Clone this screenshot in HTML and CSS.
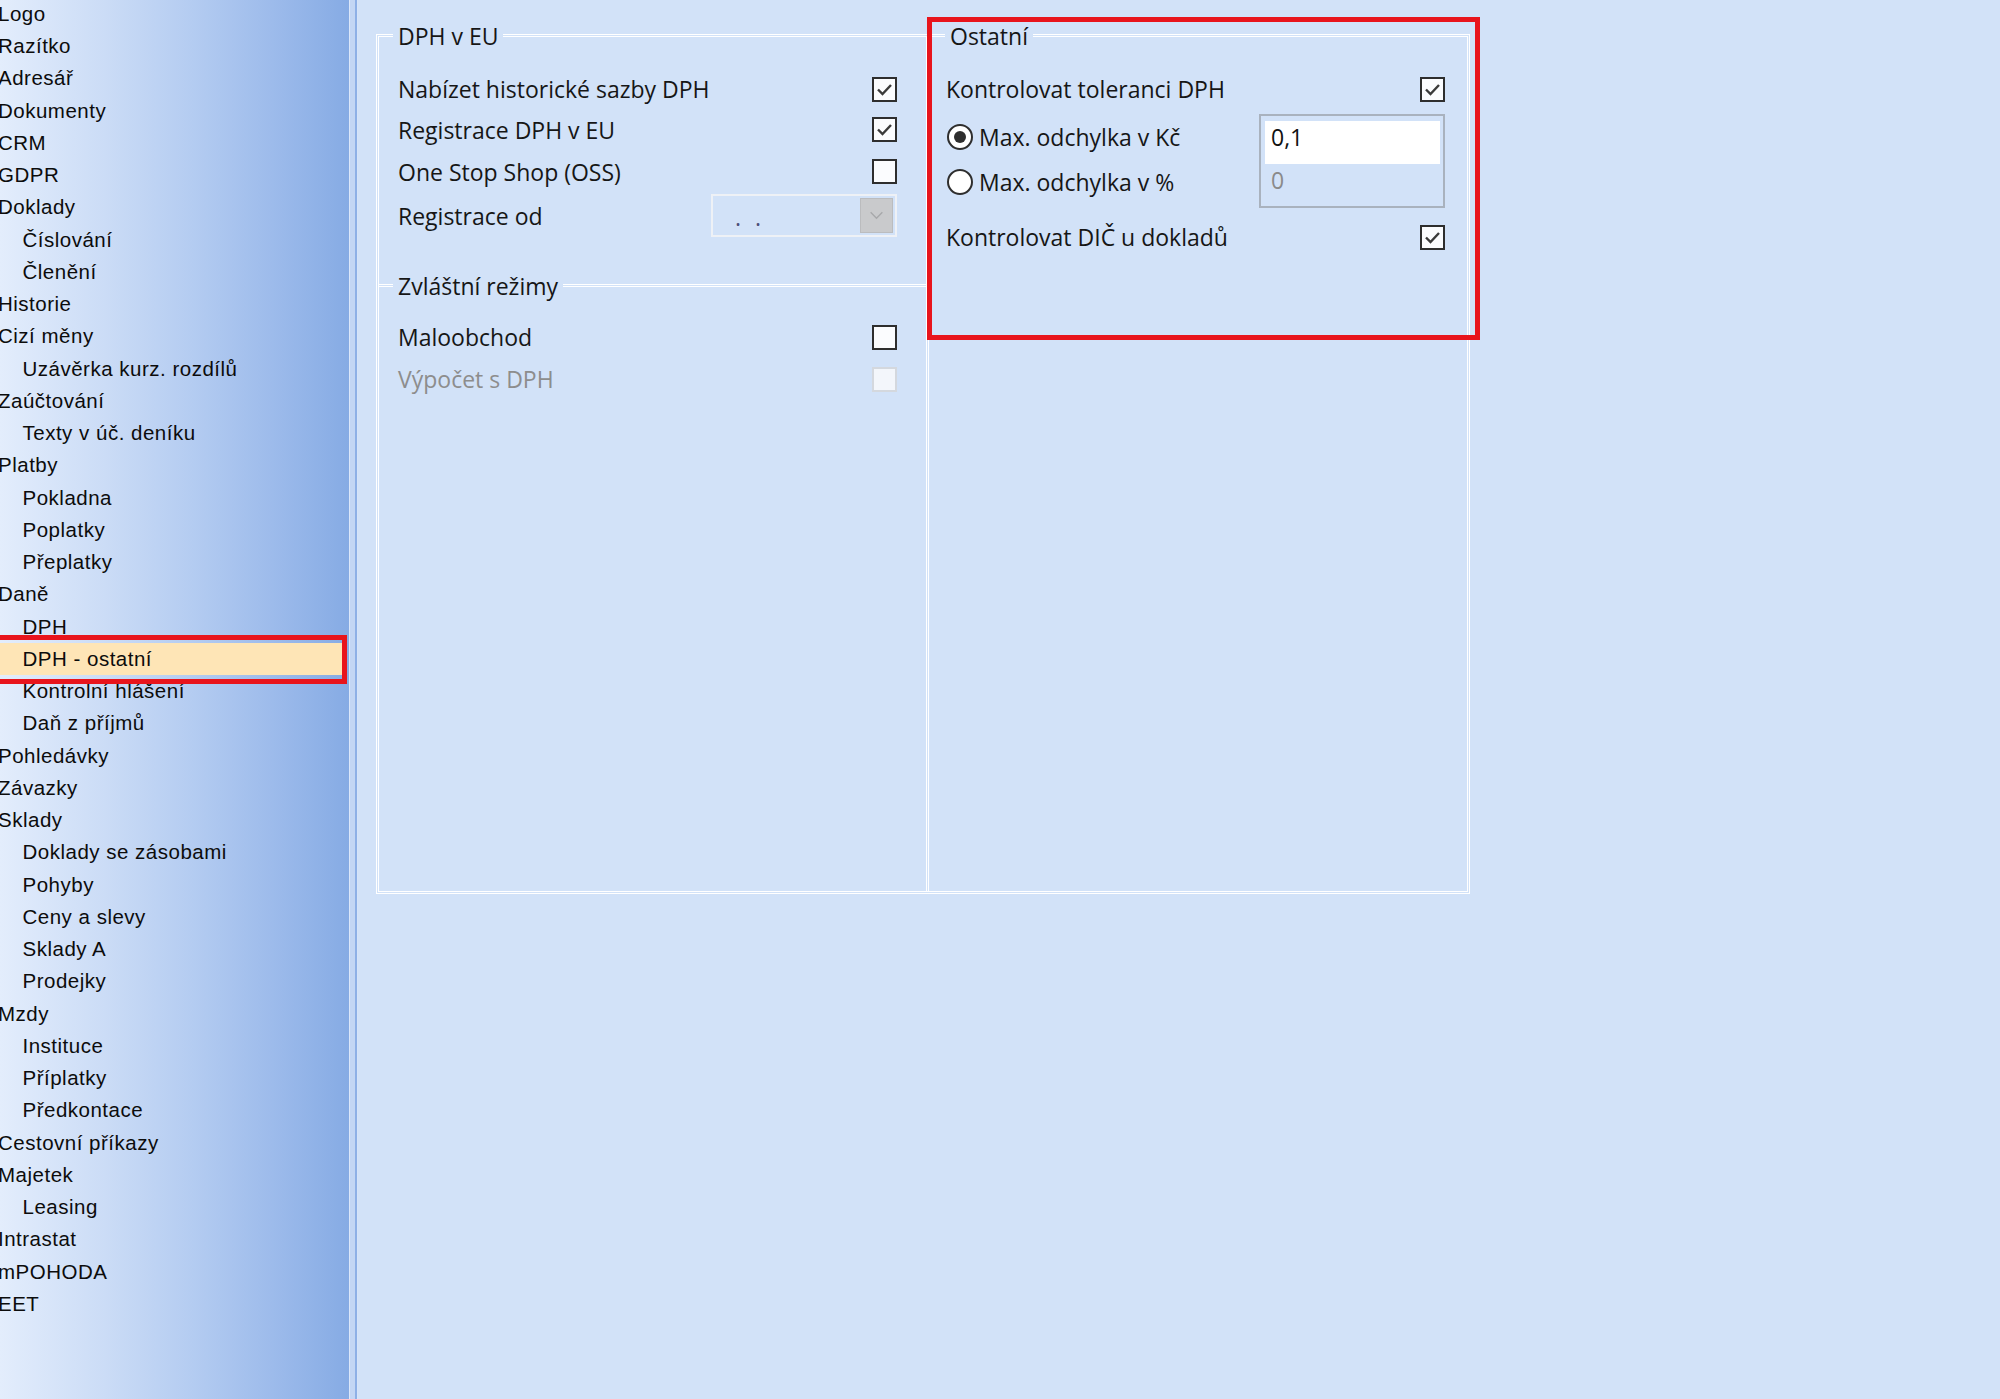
FILE: index.html
```html
<!DOCTYPE html>
<html lang="cs">
<head>
<meta charset="utf-8">
<title>Nastavení – DPH - ostatní</title>
<link rel="stylesheet" href="styles.css">
</head>
<body>
<div class="app">
  <nav class="tree">
    <ul class="tree-list">
      <li class="l0">Logo</li>
      <li class="l0">Razítko</li>
      <li class="l0">Adresář</li>
      <li class="l0">Dokumenty</li>
      <li class="l0">CRM</li>
      <li class="l0">GDPR</li>
      <li class="l0">Doklady</li>
      <li class="l1">Číslování</li>
      <li class="l1">Členění</li>
      <li class="l0">Historie</li>
      <li class="l0">Cizí měny</li>
      <li class="l1">Uzávěrka kurz. rozdílů</li>
      <li class="l0">Zaúčtování</li>
      <li class="l1">Texty v úč. deníku</li>
      <li class="l0">Platby</li>
      <li class="l1">Pokladna</li>
      <li class="l1">Poplatky</li>
      <li class="l1">Přeplatky</li>
      <li class="l0">Daně</li>
      <li class="l1">DPH</li>
      <li class="l1 sel">DPH - ostatní</li>
      <li class="l1">Kontrolní hlášení</li>
      <li class="l1">Daň z příjmů</li>
      <li class="l0">Pohledávky</li>
      <li class="l0">Závazky</li>
      <li class="l0">Sklady</li>
      <li class="l1">Doklady se zásobami</li>
      <li class="l1">Pohyby</li>
      <li class="l1">Ceny a slevy</li>
      <li class="l1">Sklady A</li>
      <li class="l1">Prodejky</li>
      <li class="l0">Mzdy</li>
      <li class="l1">Instituce</li>
      <li class="l1">Příplatky</li>
      <li class="l1">Předkontace</li>
      <li class="l0">Cestovní příkazy</li>
      <li class="l0">Majetek</li>
      <li class="l1">Leasing</li>
      <li class="l0">Intrastat</li>
      <li class="l0">mPOHODA</li>
      <li class="l0">EET</li>
    </ul>
  </nav>
  <div class="splitter"></div>
  <main class="content">
    <div class="panel">
      <div class="col col-left">
        <section class="group group-eu">
          <div class="legend">DPH v EU</div>
          <div class="rows">
            <div class="row">
              <span class="label">Nabízet historické sazby DPH</span>
              <span class="cb"><svg viewBox="0 0 21 21" class="tick"><polyline points="4,10.5 8.5,15 17,6"/></svg></span>
            </div>
            <div class="row">
              <span class="label">Registrace DPH v EU</span>
              <span class="cb"><svg viewBox="0 0 21 21" class="tick"><polyline points="4,10.5 8.5,15 17,6"/></svg></span>
            </div>
            <div class="row">
              <span class="label">One Stop Shop (OSS)</span>
              <span class="cb"></span>
            </div>
            <div class="row">
              <span class="label">Registrace od</span>
              <span class="combo">
                <span class="combo-text">. .</span>
                <span class="combo-btn"><svg viewBox="0 0 16 10" class="chev"><polyline points="1.5,1.5 8,8 14.5,1.5"/></svg></span>
              </span>
            </div>
          </div>
        </section>
        <section class="group group-special">
          <div class="legend">Zvláštní režimy</div>
          <div class="rows">
            <div class="row">
              <span class="label">Maloobchod</span>
              <span class="cb"></span>
            </div>
            <div class="row disabled">
              <span class="label">Výpočet s DPH</span>
              <span class="cb cb-disabled"></span>
            </div>
          </div>
        </section>
      </div>
      <div class="col col-right">
        <section class="group group-other">
          <div class="legend">Ostatní</div>
          <div class="rows">
            <div class="row">
              <span class="label">Kontrolovat toleranci DPH</span>
              <span class="cb"><svg viewBox="0 0 21 21" class="tick"><polyline points="4,10.5 8.5,15 17,6"/></svg></span>
            </div>
            <div class="tolerance">
              <div class="radios">
                <div class="radio-row">
                  <span class="radio checked"></span>
                  <span class="label">Max. odchylka v Kč</span>
                </div>
                <div class="radio-row">
                  <span class="radio"></span>
                  <span class="label">Max. odchylka v %</span>
                </div>
              </div>
              <div class="values">
                <div class="value-input">0,1</div>
                <div class="value-off">0</div>
              </div>
            </div>
            <div class="row row-dic">
              <span class="label">Kontrolovat DIČ u dokladů</span>
              <span class="cb"><svg viewBox="0 0 21 21" class="tick"><polyline points="4,10.5 8.5,15 17,6"/></svg></span>
            </div>
          </div>
        </section>
      </div>
    </div>
  </main>
</div>
<div class="mark mark-tree"></div>
<div class="mark mark-other"></div>
</body>
</html>
```
FILE: styles.css
```css
html, body {
  margin: 0;
  padding: 0;
}

body {
  width: 2000px;
  height: 1399px;
  overflow: hidden;
  position: relative;
  background: #d2e2f8;
  font-family: "Open Sans", "Noto Sans", sans-serif;
  font-size: 23px;
  color: #161616;
}

.app {
  display: flex;
  height: 1399px;
}

/* ---------- left tree ---------- */
.tree {
  flex: none;
  width: 349px;
  height: 100%;
  overflow: hidden;
  background: linear-gradient(to right, #e3edfc 0%, #cbdcf6 30%, #b4ccf1 55%, #9dbbeb 78%, #86abe4 100%);
}

.tree-list {
  list-style: none;
  margin: -2.2px 0 0 -2px;
  padding: 0;
  font-family: "Liberation Sans", Arial, sans-serif;
  font-size: 20.5px;
  letter-spacing: 0.5px;
  color: #0c0c0c;
}

.tree-list li {
  height: 32.25px;
  line-height: 32.25px;
  white-space: nowrap;
}

.tree-list .l1 {
  padding-left: 24.5px;
}

.tree-list .sel {
  background: #fee5b6;
  margin-right: 5px;
}

.splitter {
  flex: none;
  width: 9px;
  height: 100%;
  background: linear-gradient(to right,
    #dbe7fa 0, #dbe7fa 1px,
    #c3d6f4 1px, #c3d6f4 6px,
    #8eb0e6 6px, #8eb0e6 8px,
    #d6e4f9 8px, #d6e4f9 9px);
}

/* ---------- content ---------- */
.content {
  flex: 1;
  padding: 34px 0 0 18px;
}

.panel {
  box-sizing: border-box;
  width: 1094px;
  height: 860px;
  border: 3px double #ffffff;
  display: grid;
  grid-template-columns: 547px 1fr;
}

.col {
  display: flex;
  flex-direction: column;
}

.col-right {
  border-left: 3px double #ffffff;
}

.group-eu {
  height: 247px;
}

.group-special {
  flex: 1;
  border-top: 3px double #ffffff;
}

.legend {
  width: fit-content;
  height: 28px;
  line-height: 28px;
  margin: -15.5px 0 0 14px;
  padding: 0 5px;
  background: #d2e2f8;
  white-space: nowrap;
}

.group-other .legend {
  margin-left: 16px;
}

.rows {
  display: flex;
  flex-direction: column;
}

.col-left .rows {
  padding: 0 29px 0 19px;
}

.col-right .rows {
  padding: 0 22px 0 17px;
}

.group-eu .rows {
  margin-top: 19.5px;
}

.group-other .rows {
  margin-top: 18.5px;
}

.group-special .rows {
  margin-top: 16.5px;
}

.row {
  height: 42px;
  display: flex;
  align-items: center;
  justify-content: space-between;
}

.group-eu .row:nth-child(1) { height: 40px; }
.group-eu .row:nth-child(2) { height: 41px; }
.group-eu .row:nth-child(3) { height: 43px; }
.group-eu .row:nth-child(4) { height: 45px; }

.label {
  white-space: nowrap;
}

.disabled .label {
  color: #8d8d8d;
}

/* checkbox */
.cb {
  box-sizing: border-box;
  width: 25px;
  height: 25px;
  border: 2px solid #2e2e2e;
  background: #fbfcfe;
  display: flex;
}

.cb-disabled {
  border-color: #d4d8de;
  background: #f3f6fb;
}

.tick {
  width: 21px;
  height: 21px;
  fill: none;
  stroke: #3a3a3a;
  stroke-width: 2.4;
}

/* combobox */
.combo {
  box-sizing: border-box;
  width: 186px;
  height: 43px;
  border: 2px solid #eef1f6;
  display: flex;
  align-items: stretch;
  justify-content: space-between;
  padding: 2px;
}

.combo-text {
  padding: 8px 0 0 20px;
  line-height: 22px;
  color: #4f4f7a;
  word-spacing: 8px;
  white-space: pre;
}

.combo-btn {
  box-sizing: border-box;
  width: 33px;
  background: #c9cacc;
  border: 1px solid #bbbcbe;
  display: flex;
  align-items: center;
  justify-content: center;
}

.chev {
  width: 15px;
  height: 9px;
  fill: none;
  stroke: #a7a8aa;
  stroke-width: 1.5;
}

/* tolerance block */
.tolerance {
  margin-top: 4px;
  display: flex;
  justify-content: space-between;
  height: 94px;
}

.radios {
  display: flex;
  flex-direction: column;
}

.radio-row {
  height: 44px;
  display: flex;
  align-items: center;
  gap: 6px;
}

.radio-row:first-child {
  height: 46px;
}

.radio {
  box-sizing: border-box;
  width: 26px;
  height: 26px;
  margin-left: 1px;
  border: 2px solid #2e2e2e;
  border-radius: 50%;
  background: #ffffff;
  display: flex;
  align-items: center;
  justify-content: center;
}

.radio.checked::after {
  content: "";
  width: 12px;
  height: 12px;
  border-radius: 50%;
  background: #2e2e2e;
}

.values {
  box-sizing: border-box;
  width: 186px;
  height: 94px;
  border: 2px solid #a9b2be;
  padding: 5px 3px 0 4px;
}

.value-input {
  height: 43px;
  line-height: 32px;
  background: #ffffff;
  padding-left: 6px;
  color: #111111;
}

.value-off {
  height: 32px;
  line-height: 32px;
  padding-left: 6px;
  color: #8a8a8a;
}

.row-dic {
  margin-top: 8px;
}

/* red annotation marks */
.mark {
  position: absolute;
  box-sizing: border-box;
  border: 5px solid #e8141c;
  pointer-events: none;
}

.mark-tree {
  left: -10px;
  top: 635px;
  width: 357px;
  height: 49px;
}

.mark-other {
  left: 927px;
  top: 17px;
  width: 553px;
  height: 323px;
}
```
